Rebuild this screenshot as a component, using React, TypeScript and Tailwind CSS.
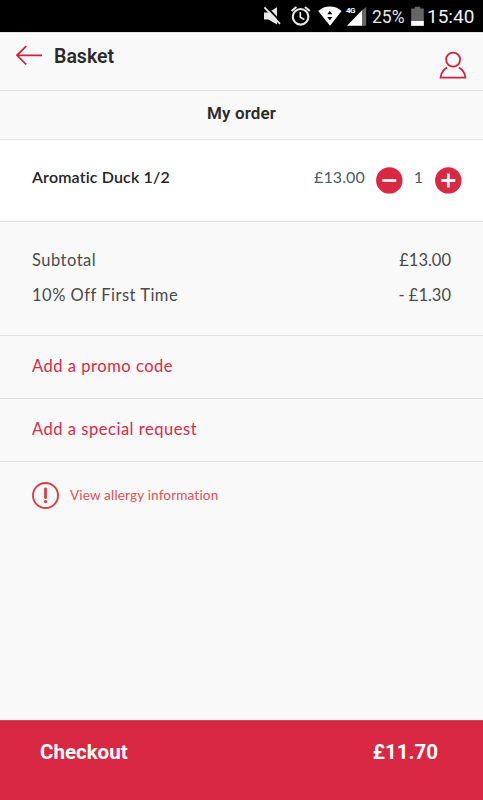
import type { ReactNode } from "react";

const BODY = "font-[Lato,'Open_Sans',sans-serif]";

function StatusBar() {
  return (
    <div className="flex h-8 shrink-0 bg-black pl-[260px] font-[Roboto,sans-serif] text-white">
      <svg className="h-8 w-[24px]" viewBox="0 0 24 32" aria-label="Muted">
        <path d="M4 12.4h4.4L17 7.2v17.2l-8.6-5H4z" fill="#e8e8e8" />
        <path d="M5.9 6.2 21.4 22.6" stroke="#000" strokeWidth="1.8" />
        <path d="M4.4 7.4 20 23.8" stroke="#e8e8e8" strokeWidth="1.8" />
      </svg>
      <svg className="ml-[5px] h-8 w-[24px]" viewBox="0 0 24 32" fill="none" stroke="#e8e8e8" aria-label="Alarm">
        <circle cx="11.6" cy="16.8" r="7.8" strokeWidth="2.1" />
        <path d="M11.3 12v5.3l4 2.3" strokeWidth="1.7" />
        <path d="m2.6 11 4.8-4M20.8 11 16 7" strokeWidth="2.1" />
      </svg>
      <svg className="ml-[5px] h-8 w-[24px]" viewBox="0 0 24 32" aria-label="Wifi">
        <path d="M.2 11C7 5.1 16.8 5.1 23.6 11L12 25.8z" fill="#fff" />
        <path d="m9.2 14.3 2.6-3.2 2.6 3.2zM9.2 17h5.2l-2.6 3.2z" fill="#000" />
      </svg>
      <div className="relative ml-[3px] h-8 w-[27px]">
        <svg className="h-8 w-[27px]" viewBox="0 0 27 32" aria-label="Signal">
          <path d="M2 25.7 17 10.3v15.4z" fill="#fff" />
          <path d="M17 10.3 21.2 7v18.7H17z" fill="#666" />
        </svg>
        <span className="absolute top-[6px] left-[1px] text-[8px] leading-[9px] font-bold tracking-[-0.5px]">4G</span>
      </div>
      <span className="w-[39px] text-[17.5px] leading-[34px] text-[#e8e8e8]">25%</span>
      <svg className="h-8 w-[14px]" viewBox="0 0 14 32" aria-label="Battery">
        <path d="M3.8 6.8h5.4v1.6h3.6v17.4H.2V8.4h3.6z" fill="#666" />
        <path d="M.2 21h12.6v4.8H.2z" fill="#fff" />
      </svg>
      <span className="ml-[2px] text-[19px] leading-[34px] whitespace-nowrap text-[#f2f2f2]">15:40</span>
    </div>
  );
}

function Header() {
  return (
    <header className="flex h-[59px] shrink-0 justify-between border-y border-[#e2e2e2] pr-4 pl-4">
      <div className="flex">
        <svg className="mt-3 h-[22px] w-[27px]" viewBox="0 0 27 22" fill="none" stroke="#d51c3b" strokeWidth="1.7" aria-label="Back">
          <path d="M26 10.3H1M10.2 1.2 1 10.3l9.2 9.2" />
        </svg>
        <h1 className="ml-[11px] pt-[9px] text-[19.5px] leading-[30px] font-semibold text-[#2b2b2b]">Basket</h1>
      </div>
      <svg className="mt-[18px] h-[30px] w-[28px]" viewBox="0 0 28 30" fill="none" stroke="#d8203e" strokeWidth="1.8" aria-label="Account">
        <circle cx="14.1" cy="8.6" r="7" />
        <path d="M8 16.6C4.4 18.8 2.1 22.4 1.6 26.6h24.8c-.5-4.2-2.8-7.8-6.4-10" />
      </svg>
    </header>
  );
}

function RoundButton({ label, children }: { label: string; children: ReactNode }) {
  return (
    <button aria-label={label} className="mt-[27px] h-[27px] w-[27px]">
      <svg viewBox="0 0 27 27" className="h-[27px] w-[27px]">
        <circle cx="13.3" cy="13.4" r="13.2" fill="#d82843" />
        {children}
      </svg>
    </button>
  );
}

function OrderItem() {
  return (
    <div className={`flex h-[82px] shrink-0 border-b border-[#e0e0e0] bg-white pl-8 text-[16px] ${BODY}`}>
      <span className="w-[282px] pt-[25px] leading-6 font-semibold tracking-[0.15px] text-[#252525]">
        Aromatic Duck 1/2
      </span>
      <span className="w-[61.5px] pt-[25px] leading-6 tracking-[0.1px] text-[#4c5a65]">£13.00</span>
      <RoundButton label="Remove one">
        <path d="M6.3 13.5h14" stroke="#fff" strokeWidth="2.6" />
      </RoundButton>
      <span className="w-[32px] pt-[25px] text-center leading-6 text-[#4c5a65]">1</span>
      <RoundButton label="Add one">
        <path d="M6.3 13.5h14M13.3 6.5v14" stroke="#fff" strokeWidth="2.8" />
      </RoundButton>
    </div>
  );
}

function TotalRow({ label, value }: { label: string; value: string }) {
  return (
    <div className="flex h-[35px] items-center justify-between">
      <span className="tracking-[0.5px]">{label}</span>
      <span>{value}</span>
    </div>
  );
}

export default function App() {
  return (
    <main className="flex h-[800px] w-[483px] flex-col overflow-hidden bg-[#f9f9f9] font-[Roboto,sans-serif]">
      <StatusBar />
      <Header />
      <h2 className="h-[49px] shrink-0 border-b border-[#e2e2e2] pt-[10px] text-center text-[17px] leading-6 font-semibold tracking-[0.1px] text-[#2b2b2b]">
        My order
      </h2>
      <OrderItem />

      <section className={`h-[114px] shrink-0 border-b border-[#e0e0e0] pt-[21px] pr-8 pl-8 text-[16.5px] text-[#4a4a4a] ${BODY}`}>
        <TotalRow label="Subtotal" value="£13.00" />
        <TotalRow label="10% Off First Time" value="- £1.30" />
      </section>

      <button className={`h-[63px] shrink-0 border-b border-[#e0e0e0] pb-px pl-8 text-left text-[16.5px] tracking-[0.53px] text-[#d92a47] ${BODY}`}>
        Add a promo code
      </button>
      <button className={`h-[63px] shrink-0 border-b border-[#e0e0e0] pb-px pl-8 text-left text-[16.5px] tracking-[0.53px] text-[#d92a47] ${BODY}`}>
        Add a special request
      </button>

      <div className={`flex h-[67px] shrink-0 items-center gap-[11px] pl-8 text-[13.5px] tracking-[0.18px] text-[#db5257] ${BODY}`}>
        <svg className="h-[27px] w-[27px]" viewBox="0 0 27 27" fill="none" stroke="#d63f45" aria-hidden="true">
          <circle cx="13.5" cy="13.5" r="12.5" strokeWidth="1.9" />
          <path d="M13.5 7v8.5" strokeWidth="2.8" strokeLinecap="round" />
          <circle cx="13.5" cy="19.6" r="1.7" fill="#d63f45" stroke="none" />
        </svg>
        <span>View allergy information</span>
      </div>

      <button className="mt-auto flex h-20 shrink-0 justify-between border-t border-[#d04a5c] bg-[#d72742] pt-4 pr-[45px] pl-10 text-[20.5px] leading-[30px] font-bold text-white">
        <span>Checkout</span>
        <span>£11.70</span>
      </button>
    </main>
  );
}
